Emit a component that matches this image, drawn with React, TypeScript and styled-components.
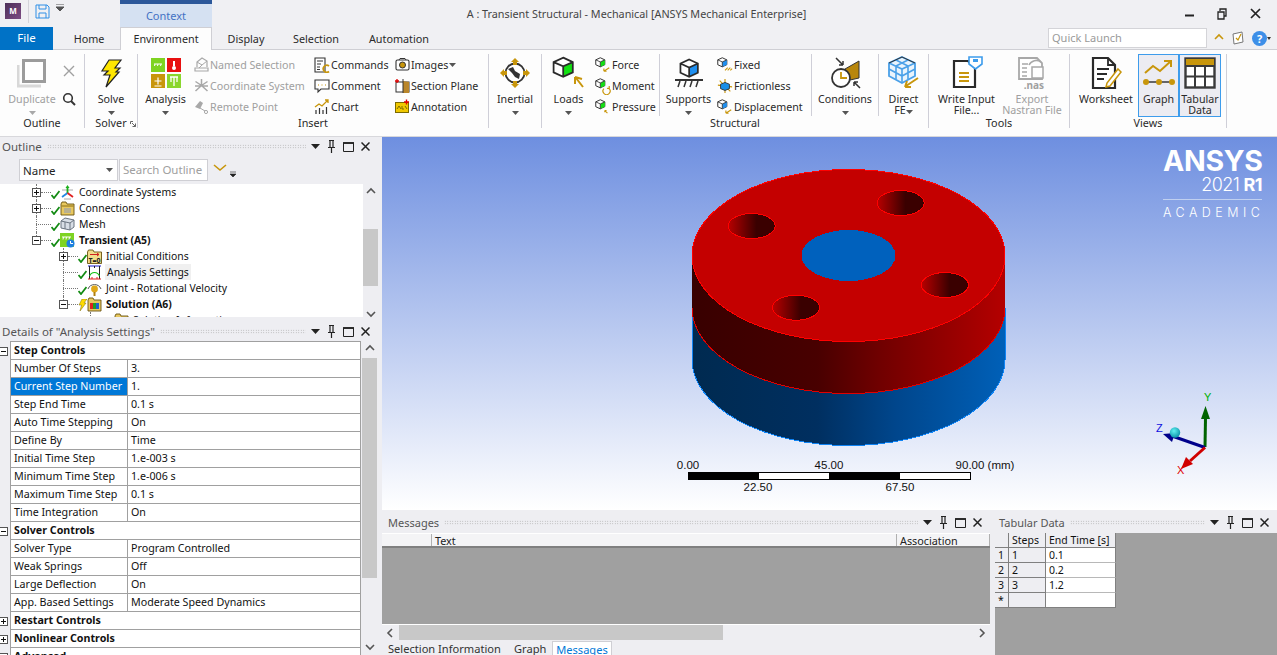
import styled, { createGlobalStyle } from "styled-components";

const GlobalStyle = createGlobalStyle`
  html, body { margin: 0; padding: 0; height: 100%; overflow: hidden; }
  body { font-family: "Noto Sans", "Liberation Sans", sans-serif; font-size: 11px; color: #1e1e1e; background: #eeeef2; }
  #root { height: 100%; }
`;

const GOLD = "#c8960c";
const GREY = "#a8a8a8";

/* ---------- little drawings ---------- */

const Check = () => (
  <CheckSlot width="9" height="9" viewBox="0 0 9 9">
    <path d="M0.5 5 L3 8 L8.5 1" fill="none" stroke="#128a12" strokeWidth="1.8" />
  </CheckSlot>
);

const Bolt = () => (
  <svg width="28" height="30" viewBox="0 0 28 30">
    <path d="M12 2 L24 2 L18 10 L23 10 L19 14 L22 14 L9 29 L13 17 L7 17 L11 13 L5 13 Z" fill="#ffe600" stroke="#222" strokeWidth="1.2" />
  </svg>
);

const SmallLoad = ({ face, mark }: { face: string; mark: "force" | "moment" | "pressure" | "fixed" | "disp" }) => (
  <svg width="18" height="18" viewBox="0 0 18 18">
    <g transform="scale(0.85)">
      <path d="M7 1 L13 3.8 L13 10.2 L7 13 L1 10.2 L1 3.8 Z" fill="#fff" stroke="#333" strokeWidth="1.3" />
      <path d="M7 6.5 L13 3.8 L13 10.2 L7 13 Z" fill={face} />
      <path d="M1 3.8 L7 6.5 L13 3.8 M7 6.5 L7 13" fill="none" stroke="#333" strokeWidth="1.1" />
    </g>
    {mark === "force" && <path d="M10 16 L16 12 M10 16 L10 13 M10 16 L13 16" stroke={GOLD} strokeWidth="1.3" fill="none" />}
    {mark === "disp" && <path d="M10 16 L16 12 M10 16 L10 13 M10 16 L13 16" stroke={GOLD} strokeWidth="1.3" fill="none" />}
    {mark === "moment" && <path d="M10 12 A4 4 0 1 0 16 12 M16 12 L16 9 M16 12 L13.5 11.5" stroke={GOLD} strokeWidth="1.3" fill="none" />}
    {mark === "pressure" && <path d="M14 16 L11 13 M11 13 L11 15 M11 13 L13 13" stroke={GOLD} strokeWidth="1.2" fill="none" />}
    {mark === "fixed" && <path d="M9 15 L12 12 M12 15 L15 12 M15 15 L17 13" stroke={GOLD} strokeWidth="1.2" fill="none" />}
  </svg>
);

const Frictionless = () => (
  <svg width="18" height="18" viewBox="0 0 18 18">
    <path d="M9 1 L9 17 M1 8 L17 10 M3 3 L15 15" stroke={GOLD} strokeWidth="1.3" />
    <path d="M9 5 L14 7 L14 12 L9 14 L4 12 L4 7 Z" fill="#1a8fe8" stroke="#333" strokeWidth="1" />
  </svg>
);

const AnalysisIcon = () => (
  <svg width="30" height="30" viewBox="0 0 30 30">
    <rect x="0" y="0" width="14" height="14" fill="#7ed321" />
    <rect x="16" y="0" width="14" height="14" fill="#e81010" />
    <rect x="0" y="16" width="14" height="14" fill="#c8960c" />
    <rect x="16" y="16" width="14" height="14" fill="#8ad62e" />
    <path d="M3 6 L11 6 M4 6 L3.5 8 M7 6 L6.5 8 M10 6 L9.5 8" stroke="#fff" strokeWidth="1" fill="none" />
    <path d="M23 3 L23 8" stroke="#fff" strokeWidth="2" />
    <circle cx="23" cy="10" r="2" fill="#fff" />
    <path d="M3.5 23 L10.5 23 M7 19.5 L7 26.5 M3.5 28 L10.5 28" stroke="#fff" strokeWidth="1.2" fill="none" />
    <path d="M19 19 L27 19 M23 19 L23 28 M20 19 L20 24 M26 19 L26 24" stroke="#fff" strokeWidth="1.3" fill="none" />
  </svg>
);

const DuplicateIcon = () => (
  <svg width="30" height="30" viewBox="0 0 30 30">
    <path d="M1 7 L1 28 L24 28" fill="none" stroke="#d8d8d8" strokeWidth="3" />
    <rect x="6.5" y="2.5" width="21" height="21" fill="#fff" stroke="#9c9c9c" strokeWidth="3" />
  </svg>
);

const GreyX = () => (
  <svg width="12" height="12" viewBox="0 0 12 12">
    <path d="M1 1 L11 11 M11 1 L1 11" stroke="#a0a0a0" strokeWidth="1.4" />
  </svg>
);

const Magnifier = () => (
  <svg width="14" height="14" viewBox="0 0 14 14">
    <circle cx="6" cy="6" r="4.3" fill="none" stroke="#333" strokeWidth="1.6" />
    <path d="M9 9 L13 13" stroke="#333" strokeWidth="2" />
  </svg>
);

const NamedSelectionIcon = () => (
  <svg width="15" height="15" viewBox="0 0 15 15">
    <path d="M1 11 L14 11 L14 14 L1 14 Z M3 10 L3 5 L8 1 L13 4 L13 10" fill="none" stroke={GREY} strokeWidth="1.2" />
    <path d="M3 5 L8 8 L13 4 M5 11 L8 8" fill="none" stroke={GREY} strokeWidth="1" />
  </svg>
);

const CoordGreyIcon = () => (
  <svg width="15" height="15" viewBox="0 0 15 15">
    <path d="M7.5 7.5 L7.5 1 M7.5 7.5 L1.5 13 M7.5 7.5 L13.5 13 M7.5 7.5 L1.5 3.5 M7.5 7.5 L13.5 3.5 M1 8 L14 8" stroke={GREY} strokeWidth="1.5" fill="none" />
  </svg>
);

const RemotePointIcon = () => (
  <svg width="15" height="15" viewBox="0 0 15 15">
    <path d="M1 8 L6 2 L9 4 L6 10 Z" fill="#a8a8a8" />
    <path d="M6 9 L11 12" stroke={GREY} strokeWidth="1" />
    <circle cx="12" cy="13" r="1.6" fill="none" stroke={GREY} />
  </svg>
);

const CommandsIcon = () => (
  <svg width="16" height="16" viewBox="0 0 16 16">
    <path d="M1 1 L11 1 L11 15 L1 15 Z" fill="#fff" stroke="#333" strokeWidth="1.1" />
    <path d="M3 4 L9 4 M3 7 L7 7 M3 10 L6 10 M3 12.5 L6 12.5" stroke="#333" strokeWidth="1" />
    <path d="M15 9 A3.5 3.5 0 1 0 15 14.5" fill="none" stroke={GOLD} strokeWidth="1.7" />
  </svg>
);

const CommentIcon = () => (
  <svg width="16" height="16" viewBox="0 0 16 16">
    <path d="M1 2 L15 2 L15 11 L7 11 L4 14 L4 11 L1 11 Z" fill="#fff" stroke="#333" strokeWidth="1.1" />
    <path d="M4 7 L5 7 M7.5 7 L8.5 7 M11 7 L12 7" stroke={GOLD} strokeWidth="1.1" />
  </svg>
);

const ChartIcon = () => (
  <svg width="16" height="16" viewBox="0 0 16 16">
    <path d="M1 8 L5 5 L8 7 L14 1 M11 1 L14 1 L14 4" fill="none" stroke={GOLD} strokeWidth="1.3" />
    <path d="M2 15 L2 11 M5.5 15 L5.5 9 M9 15 L9 11 M12.5 15 L12.5 8" stroke="#333" strokeWidth="1.2" />
  </svg>
);

const ImagesIcon = () => (
  <svg width="15" height="15" viewBox="0 0 15 15">
    <rect x="1" y="3" width="13" height="10" rx="1.5" fill="#fff" stroke="#333" strokeWidth="1.1" />
    <circle cx="7.5" cy="8" r="3" fill={GOLD} stroke="#333" strokeWidth="1" />
    <path d="M4 3 L5 1.5 L10 1.5 L11 3" fill="none" stroke="#333" />
  </svg>
);

const SectionPlaneIcon = () => (
  <svg width="15" height="15" viewBox="0 0 15 15">
    <rect x="1" y="4" width="13" height="10" fill="#fff" stroke="#333" strokeWidth="1" />
    <path d="M8 3 L8 15 L14 15 L14 4 Z" fill="#b9862a" />
    <path d="M0 3 L4 3 M2 1 L2 5" stroke="#e00000" strokeWidth="1.3" />
    <path d="M8 1 L8 15" stroke="#333" strokeWidth="1" />
  </svg>
);

const AnnotationIcon = () => (
  <svg width="15" height="15" viewBox="0 0 15 15">
    <rect x="0.5" y="3.5" width="13" height="10" fill="#f0c800" stroke="#7c6a00" />
    <path d="M2 10 L4 7 L6 10 M7 7 L7 10 L9 10 M10 7 L12 10" stroke="#7c6a00" fill="none" />
    <path d="M9 3 L14 3 M11.5 0.5 L11.5 5.5" stroke="#e00000" strokeWidth="1.4" />
  </svg>
);

const InertialIcon = () => (
  <svg width="32" height="32" viewBox="0 0 32 32">
    <circle cx="16" cy="16" r="9.5" fill="#fff" stroke="#333" strokeWidth="1.8" />
    <path d="M9 12 L14 10 L16 14 L21 17 L20 22 L16 20 L13 16 Z" fill="#333" />
    <path d="M11 4 L21 4 L18 4 L18 8 L14 8 L14 4 Z M16 1 L20 5 L12 5 Z M16 31 L20 27 L18 27 L18 24 L14 24 L14 27 L12 27 Z M1 16 L5 12 L5 14 L8 14 L8 18 L5 18 L5 20 Z M31 16 L27 12 L27 14 L24 14 L24 18 L27 18 L27 20 Z" fill={GOLD} />
  </svg>
);

const LoadsIcon = () => (
  <svg width="34" height="34" viewBox="0 0 34 34">
    <g transform="scale(1.6)">
      <path d="M7 1 L13 3.8 L13 10.2 L7 13 L1 10.2 L1 3.8 Z" fill="#fff" />
      <path d="M7 6.5 L13 3.8 L13 10.2 L7 13 Z" fill="#12e012" />
      <path d="M1 3.8 L7 6.5 L13 3.8 M7 6.5 L7 13 M7 1 L13 3.8 L13 10.2 L7 13 L1 10.2 L1 3.8 Z" fill="none" stroke="#2a2a2a" strokeWidth="1.1" />
    </g>
    <path d="M31 31 L24 22 M23 21 L23 28 M23 21 L30 23" stroke={GOLD} strokeWidth="2" fill="none" />
  </svg>
);

const SupportsIcon = () => (
  <svg width="32" height="32" viewBox="0 0 32 32">
    <g transform="translate(6 1) scale(1.45)">
      <path d="M7 1 L13 3.8 L13 10.2 L7 13 L1 10.2 L1 3.8 Z" fill="#fff" />
      <path d="M7 6.5 L13 3.8 L13 10.2 L7 13 Z" fill="#1e8ff0" />
      <path d="M1 3.8 L7 6.5 L13 3.8 M7 6.5 L7 13 M7 1 L13 3.8 L13 10.2 L7 13 L1 10.2 L1 3.8 Z" fill="none" stroke="#2a2a2a" strokeWidth="1.2" />
    </g>
    <path d="M2 23 L30 23" stroke="#333" strokeWidth="2" />
    <path d="M7 24 L5 30 M13 24 L11 30 M19 24 L17 30 M25 24 L23 30" stroke="#333" strokeWidth="1.5" />
  </svg>
);

const ConditionsIcon = () => (
  <svg width="34" height="34" viewBox="0 0 34 34">
    <path d="M17 13 L31 5 L31 22 L22 24 Z" fill="#b8860b" stroke="#333" strokeWidth="1" />
    <circle cx="13" cy="22" r="9" fill="#fff" stroke="#333" strokeWidth="1.8" />
    <path d="M13 16 L13 22 L19 22" fill="none" stroke={GOLD} strokeWidth="1.8" />
    <path d="M8 2 L15 9 M15 9 L15 5 M15 9 L11 9 M32 32 L26 26 M26 26 L30 26 M26 26 L26 30" fill="none" stroke="#333" strokeWidth="1.5" />
  </svg>
);

const DirectFeIcon = () => (
  <svg width="32" height="34" viewBox="0 0 32 34">
    <path d="M14 1 L27 7 L27 20 L14 27 L1 20 L1 7 Z" fill="#eaf4fc" stroke="#4aa0e8" strokeWidth="1.8" />
    <path d="M1 7 L14 13 L27 7 M14 13 L14 27 M8 4 L20 10 M20 4 L8 10 M1 13 L14 20 L27 13 M8 10 L8 23 M20 10 L20 23" fill="none" stroke="#4aa0e8" strokeWidth="1.6" />
    <path d="M1 7 L14 1 L27 7" fill="none" stroke="#333" strokeWidth="1" />
    <path d="M30 22 L18 30 M17 31 L23 31 M17 31 L19 25" stroke={GOLD} strokeWidth="2" fill="none" />
  </svg>
);

const WriteInputIcon = () => (
  <svg width="34" height="34" viewBox="0 0 34 34">
    <path d="M4 5 L18 5 L25 12 L25 31 L4 31 Z" fill="#fff" stroke="#2a2a2a" strokeWidth="2.2" />
    <path d="M9 17 L19 17 M9 21 L19 21 M9 25 L19 25" stroke={GOLD} strokeWidth="2" />
    <path d="M19 1 L32 1 L32 8 L25.5 13 L19 8 Z" fill="#fff" stroke="#3d9cec" strokeWidth="1.6" />
    <rect x="23" y="3" width="5" height="3" fill="#3d9cec" />
  </svg>
);

const ExportIcon = () => (
  <svg width="34" height="34" viewBox="0 0 34 34">
    <path d="M4 2 L22 2 L27 7 L27 23 L4 23 Z" fill="#fff" stroke="#a8a8a8" strokeWidth="1.8" />
    <path d="M7 8 L13 8 M7 12 L12 12 M7 16 L12 16 M7 20 L12 20" stroke="#a8a8a8" strokeWidth="1.4" />
    <path d="M14 9 A8 8 0 0 1 26 6" fill="none" stroke="#a8a8a8" strokeWidth="1.6" />
    <rect x="17" y="11" width="11" height="11" fill="#fff" stroke="#a8a8a8" strokeWidth="1.5" />
    <text x="29" y="33" textAnchor="end" fontSize="10" fontWeight="700" fill="#a0a0a0">.nas</text>
  </svg>
);

const WorksheetIcon = () => (
  <svg width="34" height="34" viewBox="0 0 34 34">
    <path d="M4 2 L19 2 L26 9 L26 32 L4 32 Z" fill="#fff" stroke="#2a2a2a" strokeWidth="2.2" />
    <path d="M19 2 L19 9 L26 9" fill="none" stroke="#2a2a2a" strokeWidth="1.8" />
    <path d="M8 13 L20 13 M8 18 L18 18 M8 23 L15 23" stroke="#2a2a2a" strokeWidth="2" />
    <path d="M29 13 L32 16 L21 30 L17 31 L18 27 Z" fill="#fff" stroke={GOLD} strokeWidth="1.5" />
  </svg>
);

const GraphIcon = () => (
  <svg width="32" height="28" viewBox="0 0 32 28">
    <path d="M2 14 L10 7 L17 12 L28 2 M21 2 L28 2 L28 8" fill="none" stroke={GOLD} strokeWidth="2" />
    <path d="M3 23 L29 23" stroke="#444" strokeWidth="1.6" />
    <circle cx="3" cy="23" r="3" fill={GOLD} />
    <circle cx="16" cy="23" r="3" fill={GOLD} />
    <circle cx="29" cy="23" r="3" fill={GOLD} />
  </svg>
);

const TableIcon = () => (
  <svg width="32" height="32" viewBox="0 0 32 32">
    <rect x="1.5" y="1.5" width="29" height="29" fill="#fff" stroke="#3a3a3a" strokeWidth="2.4" />
    <rect x="2" y="2" width="28" height="6" fill={GOLD} />
    <path d="M2 9 L30 9 M2 19.5 L30 19.5 M11 9 L11 30 M21 9 L21 30" stroke="#3a3a3a" strokeWidth="2" />
  </svg>
);

const Triangle = ({ color = "#555" }: { color?: string }) => (
  <svg width="7" height="4" viewBox="0 0 7 4">
    <path d="M0 0 L7 0 L3.5 4 Z" fill={color} />
  </svg>
);

const Chevron = ({ dir, color = "#555" }: { dir: "up" | "down" | "left" | "right"; color?: string }) => {
  const d = { up: "M1 6 L5 2 L9 6", down: "M1 3 L5 7 L9 3", left: "M6 1 L2 5 L6 9", right: "M3 1 L7 5 L3 9" }[dir];
  return (
    <svg width="10" height="10" viewBox="0 0 10 10">
      <path d={d} fill="none" stroke={color} strokeWidth="1.6" />
    </svg>
  );
};

const PanelButtons = () => (
  <PanelIcons>
    <svg width="9" height="5" viewBox="0 0 9 5"><path d="M0 0 L9 0 L4.5 5 Z" fill="#222" /></svg>
    <svg width="9" height="13" viewBox="0 0 9 13"><path d="M2 0.5 L7 0.5 M3 1 L3 7 M6 1 L6 7 M1 7.5 L8 7.5 M4.5 8 L4.5 13" stroke="#222" strokeWidth="1.2" fill="none" /></svg>
    <svg width="11" height="10" viewBox="0 0 11 10"><path d="M0.5 1 L10.5 1 L10.5 9.5 L0.5 9.5 Z" fill="none" stroke="#222" strokeWidth="1" /><path d="M0 1 L11 1" stroke="#222" strokeWidth="1.8" /></svg>
    <svg width="9" height="9" viewBox="0 0 9 9"><path d="M0.5 0.5 L8.5 8.5 M8.5 0.5 L0.5 8.5" stroke="#222" strokeWidth="1.5" /></svg>
  </PanelIcons>
);

/* tree icons */
const Folder = ({ inner }: { inner: string }) => (
  <svg width="15" height="15" viewBox="0 0 15 15">
    <path d="M1 3 L1 14 L14 14 L14 3 L7 3 L6 1 L2 1 Z" fill="#e8c860" stroke="#6a5410" strokeWidth="0.9" />
    <path d="M1.5 5 L13.5 5" stroke="#8c6f14" />
    <rect x="4" y="7" width="7" height="5" fill={inner} />
  </svg>
);
const CoordIcon = () => (
  <svg width="15" height="15" viewBox="0 0 15 15">
    <path d="M2 5 L13 5 M4 14 L11 14" stroke="#aaa" strokeWidth="1" />
    <path d="M7.5 8 L7.5 2" stroke="#1cb01c" strokeWidth="1.8" />
    <path d="M7.5 8 L2 12" stroke="#2288e0" strokeWidth="1.8" />
    <path d="M7.5 8 L13 12" stroke="#e02020" strokeWidth="1.8" />
    <path d="M7.5 0 L5.5 3 L9.5 3 Z" fill="#1cb01c" />
  </svg>
);
const MeshIcon = () => (
  <svg width="15" height="15" viewBox="0 0 15 15">
    <path d="M1 4 L5 1 L14 3 L14 10 L10 13 L1 11 Z" fill="#d8dee6" stroke="#6a7480" />
    <path d="M1 4 L10 6 L14 3 M10 6 L10 13 M5 5 L5 12" fill="none" stroke="#6a7480" />
  </svg>
);
const TransientIcon = () => (
  <svg width="15" height="15" viewBox="0 0 15 15">
    <rect x="0" y="0" width="14" height="14" fill="#7ed321" />
    <path d="M2 4 L11 4 M3.5 4 L3 6.5 M6.5 4 L6 6.5 M9.5 4 L9 6.5" stroke="#fff" />
    <circle cx="10.5" cy="10.5" r="4" fill="#1e80e0" />
    <path d="M10.5 8 L10.5 10.5 L13 10.5" stroke="#fff" fill="none" />
  </svg>
);
const InitialIcon = () => (
  <svg width="15" height="15" viewBox="0 0 15 15">
    <path d="M0.5 3 L0.5 14.5 L14.5 14.5 L14.5 3 L7 3 L6 1 L1.5 1 Z" fill="#f0dc8c" stroke="#6a5410" strokeWidth="0.9" />
    <path d="M3 5.5 L12 5.5 M10 4 L12 5.5 L10 7" stroke="#d02020" fill="none" />
    <text x="7.5" y="13.5" textAnchor="middle" fontSize="7" fontWeight="700" fill="#222">T=0</text>
  </svg>
);
const AnalysisSettingsIcon = () => (
  <svg width="15" height="15" viewBox="0 0 15 15">
    <path d="M1 1 L14 1" stroke="#1a1ad0" strokeWidth="1" />
    <path d="M2.5 1 L2.5 14 M12.5 1 L12.5 14 M7.5 1 L7.5 3" stroke="#222" />
    <path d="M1 14 L14 14 M5 14 L5 12 M10 14 L10 12" stroke="#e02020" />
    <path d="M2.5 11 A5.5 6 0 0 1 12.5 11" stroke="#12c012" strokeWidth="1.2" fill="none" />
  </svg>
);
const JointIcon = () => (
  <svg width="15" height="15" viewBox="0 0 15 15">
    <path d="M1 8 A7 7 0 0 1 14 8" stroke="#555" fill="none" />
    <circle cx="7.5" cy="8" r="3.4" fill="#e0a818" />
    <path d="M7.5 11 L7.5 15" stroke="#b08010" strokeWidth="2" />
  </svg>
);
const SolutionIcon = () => (
  <svg width="15" height="15" viewBox="0 0 15 15">
    <path d="M1 3 L1 14 L14 14 L14 3 L7 3 L6 1 L2 1 Z" fill="#e8c860" stroke="#6a5410" strokeWidth="0.9" />
    <rect x="3" y="6" width="3" height="6" fill="#e02020" />
    <rect x="6" y="6" width="3" height="6" fill="#20a020" />
    <rect x="9" y="6" width="3" height="6" fill="#2060d0" />
  </svg>
);
const TreeBolt = () => (
  <CheckSlot width="9" height="12" viewBox="0 0 9 12">
    <path d="M4 0 L9 0 L6 4 L8 4 L2 12 L3.5 6 L1 6 Z" fill="#ffdc00" stroke="#7c6a00" strokeWidth="0.5" />
  </CheckSlot>
);

/* ---------- shell ---------- */

const Page = styled.div`
  width: 1277px;
  height: 655px;
  display: flex;
  flex-direction: column;
  overflow: hidden;
`;

const TitleBar = styled.div`
  height: 27px;
  display: grid;
  grid-template-columns: 1fr auto 1fr;
  background: #f0f0f3;
`;

const QuickAccess = styled.div`
  display: flex;
  align-items: flex-start;
  padding-left: 5px;
`;

const AppMark = styled.div`
  width: 16px;
  height: 16px;
  margin-top: 3px;
  background: linear-gradient(135deg, #4c2f58, #7d4d84);
  color: #fff;
  font-size: 8px;
  font-weight: 700;
  line-height: 16px;
  text-align: center;
`;

const QuickSep = styled.div`
  width: 1px;
  height: 23px;
  background: #d4d4da;
  margin: 0 6px 0 7px;
`;

const SaveSlot = styled.div`
  margin-top: 4px;
  display: flex;
  gap: 6px;
  align-items: flex-start;
  width: 85px;
`;

const ContextTab = styled.div`
  width: 92px;
  height: 27px;
  box-sizing: border-box;
  border-top: 4px solid #2b579a;
  background: #d5e1f2;
  color: #4472c4;
  text-align: center;
  font-size: 11px;
  line-height: 23px;
`;

const WindowTitle = styled.div`
  color: #444;
  font-size: 10.8px;
  line-height: 27px;
  margin-right: 4px;
`;

const WindowButtons = styled.div`
  display: flex;
  justify-content: flex-end;
  align-items: center;
  gap: 23px;
  padding: 0 16px 0 0;
`;

const TabRow = styled.div`
  height: 23px;
  display: flex;
  background: #f0f0f3;
  border-bottom: 1px solid #cfcfd4;
  box-sizing: border-box;
`;

const FileTab = styled.div`
  width: 53px;
  height: 23px;
  background: #0072c6;
  color: #fff;
  text-align: center;
  line-height: 22px;
  font-size: 11.5px;
`;

const Tab = styled.div<{ $w: number; $active?: boolean; $inset?: number }>`
  width: ${(p) => p.$w}px;
  height: ${(p) => (p.$active ? 23 : 22)}px;
  box-sizing: border-box;
  padding-left: ${(p) => p.$inset ?? 0}px;
  text-align: center;
  font-size: 10.8px;
  color: #2a2a2a;
  background: ${(p) => (p.$active ? "#fdfdfd" : "transparent")};
  border: ${(p) => (p.$active ? "1px solid #cfcfd4" : "none")};
  border-bottom: none;
  line-height: ${(p) => (p.$active ? 22 : 23)}px;
`;

const TabTools = styled.div`
  margin-left: auto;
  display: flex;
  align-items: center;
  gap: 7px;
  height: 22px;
  padding-right: 6px;
`;

const QuickLaunch = styled.div`
  width: 159px;
  height: 20px;
  box-sizing: border-box;
  border: 1px solid #d4d4d8;
  background: #fff;
  color: #9a9a9a;
  padding-left: 3px;
  line-height: 18px;
  font-size: 11px;
`;

/* ---------- ribbon ---------- */

const Ribbon = styled.div`
  height: 87px;
  flex: none;
  display: flex;
  background: #fdfdfd;
  border-bottom: 1px solid #d8d8dc;
  box-sizing: border-box;
  padding-top: 4px;
`;

const Group = styled.div<{ $w: number }>`
  width: ${(p) => p.$w}px;
  height: 74px;
  box-sizing: border-box;
  border-right: 1px solid #cfcfd8;
  display: flex;
  flex-direction: column;
  flex: none;
`;

const GroupBody = styled.div<{ $inset?: number }>`
  height: 63px;
  display: flex;
  padding-left: ${(p) => p.$inset ?? 0}px;
`;

const GroupLabel = styled.div<{ $inset?: number }>`
  text-align: center;
  line-height: 12px;
  font-size: 10.8px;
  color: #2a2a2a;
  padding-left: ${(p) => p.$inset ?? 0}px;
`;

const Launcher = styled.svg`
  margin-left: 3px;
`;

const Big = styled.div<{ $w: number; $disabled?: boolean; $hot?: boolean }>`
  width: ${(p) => p.$w}px;
  height: 63px;
  flex: none;
  box-sizing: border-box;
  display: flex;
  flex-direction: column;
  align-items: center;
  color: ${(p) => (p.$disabled ? "#a0a0a0" : "#2a2a2a")};
  background: ${(p) => (p.$hot ? "#ececf2" : "transparent")};
  border: ${(p) => (p.$hot ? "1px solid #3d9cec" : "1px solid transparent")};
  font-size: 10.7px;
  line-height: 11px;
  text-align: center;
  white-space: nowrap;
`;

const BigIcon = styled.div`
  height: 36px;
  display: flex;
  align-items: center;
  justify-content: center;
`;

const BigText = styled.div`
  margin-top: 1px;
  padding-top: 2px;
`;

const BigCaret = styled.div`
  margin-top: 6px;
  line-height: 0;
`;

const Column = styled.div<{ $w: number }>`
  width: ${(p) => p.$w}px;
  flex: none;
  display: flex;
  flex-direction: column;
`;

const SmallButton = styled.div<{ $disabled?: boolean }>`
  height: 21px;
  display: flex;
  align-items: center;
  gap: 1px;
  font-size: 10.7px;
  color: ${(p) => (p.$disabled ? "#a0a0a0" : "#2a2a2a")};
  white-space: nowrap;
`;

const IconCell = styled.div`
  width: 16px;
  flex: none;
  display: flex;
  align-items: center;
  justify-content: center;
`;

const InnerSep = styled.div`
  width: 1px;
  height: 62px;
  flex: none;
  background: #cfcfd8;
`;

const SmallTools = styled.div`
  width: 10px;
  flex: none;
  display: flex;
  flex-direction: column;
  align-items: center;
  padding-top: 11px;
  gap: 15px;
`;

/* ---------- main area ---------- */

const Main = styled.div`
  flex: 1;
  min-height: 0;
  display: flex;
  background: #eeeef2;
`;

const LeftColumn = styled.div`
  width: 378px;
  margin-right: 4px;
  display: flex;
  flex-direction: column;
  flex: none;
`;

const PanelHeader = styled.div<{ $tall?: boolean; $inset?: number }>`
  height: 19px;
  margin-bottom: ${(p) => (p.$tall ? 1 : 0)}px;
  flex: none;
  display: flex;
  align-items: center;
  padding: 0 8px 0 ${(p) => p.$inset ?? 2}px;
  background: #eeeef2;
  color: #555;
  font-size: ${(p) => (p.$tall ? 11 : 11.5)}px;
  gap: 5px;
`;

const Grip = styled.div`
  flex: 1;
  height: 5px;
  background-image: radial-gradient(#a8a8a8 0.6px, transparent 0.7px);
  background-size: 2.5px 2.5px;
`;

const PanelIcons = styled.div`
  display: flex;
  align-items: center;
  gap: 7px;
`;

const OutlinePanel = styled.div`
  height: 185px;
  display: flex;
  flex-direction: column;
  flex: none;
`;

const OutlineTools = styled.div`
  height: 28px;
  flex: none;
  display: flex;
  align-items: center;
  padding-left: 19px;
  gap: 1px;
`;

const NameSelect = styled.div`
  width: 99px;
  height: 22px;
  box-sizing: border-box;
  border: 1px solid #cfcfd4;
  background: #fff;
  display: flex;
  align-items: center;
  justify-content: space-between;
  padding: 0 4px 0 3px;
  font-size: 11.5px;
`;

const SearchBox = styled.div`
  width: 89px;
  height: 22px;
  box-sizing: border-box;
  border: 1px solid #cfcfd4;
  background: #fff;
  color: #a0a0a0;
  padding-left: 3px;
  line-height: 20px;
  font-size: 11.5px;
`;

const TreeArea = styled.div`
  flex: 1;
  min-height: 0;
  display: flex;
`;

const Tree = styled.div`
  flex: 1;
  background: #fff;
  overflow: hidden;
  height: 133px;
`;

const TreeRow = styled.div<{ $level: number; $end?: boolean }>`
  position: relative;
  height: 16px;
  display: flex;
  align-items: center;
  padding-left: ${(p) => 32 + p.$level * 27}px;
  &::before {
    content: "";
    position: absolute;
    left: ${(p) => 36 + p.$level * 27}px;
    top: 0;
    bottom: ${(p) => (p.$end ? "8px" : "0")};
    border-left: 1px dotted #777;
  }
`;

const Expander = styled.div`
  position: relative;
  z-index: 1;
  width: 9px;
  height: 9px;
  box-sizing: border-box;
  border: 1px solid #555;
  background: #fff;
  flex: none;
  display: flex;
  align-items: center;
  justify-content: center;
`;

const GutterExpander = styled(Expander)`
  margin-left: -1px;
`;

const ExpanderBar = styled.div<{ $plus?: boolean }>`
  width: 5px;
  height: 1px;
  background: #111;
  position: relative;
  &::after {
    content: "";
    display: ${(p) => (p.$plus ? "block" : "none")};
    position: absolute;
    left: 2px;
    top: -2px;
    width: 1px;
    height: 5px;
    background: #111;
  }
`;

const Stub = styled.div<{ $long?: boolean }>`
  width: ${(p) => (p.$long ? 15 : 10)}px;
  margin-left: ${(p) => (p.$long ? 4 : 0)}px;
  flex: none;
  border-top: 1px dotted #777;
`;

const CheckSlot = styled.svg`
  flex: none;
  align-self: flex-end;
  margin-bottom: 1px;
`;

const TreeIconSlot = styled.div`
  width: 15px;
  height: 15px;
  flex: none;
  line-height: 0;
`;

const TreeLabel = styled.div<{ $bold?: boolean; $selected?: boolean }>`
  margin-left: ${(p) => (p.$selected ? 3 : 4)}px;
  padding: 0 ${(p) => (p.$selected ? "2px" : "0")};
  font-size: 10.4px;
  line-height: 16px;
  font-weight: ${(p) => (p.$bold ? 700 : 400)};
  background: ${(p) => (p.$selected ? "#f0f0f0" : "transparent")};
  color: #111;
  white-space: nowrap;
`;

const ScrollBar = styled.div`
  width: 15px;
  flex: none;
  display: flex;
  flex-direction: column;
  background: #eeeef2;
`;

const ScrollArrow = styled.div`
  height: 16px;
  display: flex;
  align-items: center;
  justify-content: center;
  flex: none;
`;

const SideArrow = styled(ScrollArrow)`
  width: 17px;
`;

const ScrollTrack = styled.div<{ $offset: number }>`
  flex: 1;
  min-height: 0;
  padding-top: ${(p) => p.$offset}px;
`;

const ScrollThumb = styled.div<{ $size: number }>`
  height: ${(p) => p.$size}px;
  background: #c8c8c8;
`;

const DetailsPanel = styled.div`
  flex: 1;
  min-height: 0;
  display: flex;
  flex-direction: column;
  overflow: hidden;
`;

const DetailsBody = styled.div`
  flex: 1;
  min-height: 0;
  display: flex;
  gap: 1px;
`;

const PropList = styled.div`
  width: 361px;
  flex: none;
  overflow: hidden;
`;

const PropRow = styled.div`
  display: flex;
  height: 18px;
`;

const Gutter = styled.div`
  width: 10px;
  flex: none;
  display: flex;
  align-items: center;
`;

const PropName = styled.div<{ $selected?: boolean }>`
  width: 118px;
  flex: none;
  box-sizing: border-box;
  padding-left: 3px;
  line-height: 17px;
  font-size: 10.7px;
  white-space: nowrap;
  overflow: hidden;
  background: ${(p) => (p.$selected ? "#0078d7" : "#fff")};
  color: ${(p) => (p.$selected ? "#fff" : "#111")};
  border: 1px solid #a0a0a0;
  border-top: none;
`;

const PropValue = styled.div`
  flex: 1;
  box-sizing: border-box;
  padding-left: 3px;
  line-height: 17px;
  font-size: 10.7px;
  background: #fff;
  color: #111;
  border-bottom: 1px solid #a0a0a0;
  border-right: 1px solid #a0a0a0;
`;

const PropSection = styled.div`
  flex: 1;
  box-sizing: border-box;
  padding-left: 3px;
  line-height: 17px;
  font-size: 10.7px;
  font-weight: 700;
  background: #fff;
  color: #111;
  border: 1px solid #a0a0a0;
  border-top: none;
`;

const PropTop = styled.div`
  height: 0;
  margin-left: 10px;
  border-top: 1px solid #a0a0a0;
`;

const RightColumn = styled.div`
  flex: 1;
  min-width: 0;
  display: flex;
  flex-direction: column;
`;

const Viewport = styled.div`
  position: relative;
  height: 373px;
  flex: none;
  background: linear-gradient(#6e8fe0, #ffffff);
  overflow: hidden;
  margin-bottom: 3px;
`;

const ModelDrawing = styled.svg`
  display: block;
`;

const Logo = styled.div`
  position: absolute;
  top: 9px;
  right: 15px;
  width: 99px;
  color: #fff;
  text-align: right;
  font-family: Inter, sans-serif;
`;

const LogoName = styled.div`
  font-size: 28.5px;
  line-height: 30px;
  font-weight: 700;
  letter-spacing: -0.3px;
`;

const LogoRelease = styled.div`
  font-size: 18px;
  line-height: 18px;
  font-weight: 300;
  letter-spacing: -0.6px;
  & b {
    font-weight: 700;
  }
`;

const LogoEdition = styled.div`
  margin-top: 5px;
  padding-top: 6px;
  border-top: 1px solid #c0d0f0;
  font-size: 12.5px;
  line-height: 14px;
  font-weight: 300;
  letter-spacing: 4.5px;
  text-align: left;
  white-space: nowrap;
`;

const BottomRow = styled.div`
  flex: 1;
  min-height: 0;
  display: flex;
  gap: 5px;
`;

const MessagesPanel = styled.div`
  width: 608px;
  flex: none;
  display: flex;
  flex-direction: column;
`;

const MessagesHeader = styled.div`
  height: 12px;
  flex: none;
  display: flex;
  background: #f4f4f6;
  border-top: 1px solid #fff;
  font-size: 10.8px;
  line-height: 14px;
  color: #222;
  border-bottom: 2px solid #808080;
  box-sizing: content-box;
`;

const MessagesCol = styled.div<{ $w?: number }>`
  width: ${(p) => (p.$w ? `${p.$w}px` : "auto")};
  flex: ${(p) => (p.$w ? "none" : "1")};
  box-sizing: border-box;
  padding-left: 3px;
  border-right: 1px solid #b0b0b0;
`;

const MessagesBody = styled.div`
  height: 76px;
  flex: none;
  background: #a0a0a0;
`;

const HorizontalBar = styled.div`
  height: 16px;
  flex: none;
  display: flex;
  align-items: center;
  background: #eeeef2;
  border-top: 1px solid #fff;
  box-sizing: border-box;
`;

const HorizontalTrack = styled.div`
  flex: 1;
  height: 15px;
`;

const HorizontalThumb = styled.div`
  width: 324px;
  height: 15px;
  background: #c8c8c8;
`;

const BottomTabs = styled.div`
  flex: 1;
  display: flex;
  padding: 1px 0 0 6px;
  font-size: 11.1px;
  line-height: 15px;
  color: #333;
  align-items: flex-start;
  overflow: hidden;
`;

const BottomTab = styled.div<{ $w: number; $active?: boolean }>`
  width: ${(p) => p.$w}px;
  flex: none;
  height: 15px;
  box-sizing: border-box;
  color: ${(p) => (p.$active ? "#0078d7" : "#333")};
  background: ${(p) => (p.$active ? "#fff" : "transparent")};
  border: ${(p) => (p.$active ? "1px solid #cfcfd4" : "none")};
  border-bottom: none;
  text-align: ${(p) => (p.$active ? "center" : "left")};
  white-space: nowrap;
`;

const TabularPanel = styled.div`
  flex: 1;
  min-width: 0;
  display: flex;
  flex-direction: column;
`;

const TabularBody = styled.div`
  flex: 1;
  background: #a0a0a0;
`;

const DataTable = styled.table`
  border-collapse: separate;
  border-spacing: 0;
  table-layout: fixed;
  width: 121px;
  font-size: 10.5px;
  color: #111;
`;

const DataCell = styled.td<{ $w?: number; $head?: boolean; $white?: boolean }>`
  width: ${(p) => (p.$w ? `${p.$w}px` : "auto")};
  height: 13px;
  line-height: 13px;
  padding: 1px 0 0 3px;
  box-sizing: content-box;
  background: ${(p) => (p.$white ? "#fff" : "#eeeef2")};
  border-right: 1px solid #808080;
  border-bottom: 1px solid ${(p) => (p.$head ? "#808080" : "#b8b8b8")};
`;

const rowsA: [string, string][] = [
  ["Number Of Steps", "3."],
  ["Current Step Number", "1."],
  ["Step End Time", "0.1 s"],
  ["Auto Time Stepping", "On"],
  ["Define By", "Time"],
  ["Initial Time Step", "1.e-003 s"],
  ["Minimum Time Step", "1.e-006 s"],
  ["Maximum Time Step", "0.1 s"],
  ["Time Integration", "On"],
];

const rowsB: [string, string][] = [
  ["Solver Type", "Program Controlled"],
  ["Weak Springs", "Off"],
  ["Large Deflection", "On"],
  ["App. Based Settings", "Moderate Speed Dynamics"],
];

const Section = ({ title, open }: { title: string; open?: boolean }) => (
  <PropRow>
    <Gutter>
      <GutterExpander>
        <ExpanderBar $plus={!open} />
      </GutterExpander>
    </Gutter>
    <PropSection>{title}</PropSection>
  </PropRow>
);

const Rows = ({ rows }: { rows: [string, string][] }) => (
  <>
    {rows.map(([name, value]) => (
      <PropRow key={name}>
        <Gutter />
        <PropName $selected={name === "Current Step Number"}>{name}</PropName>
        <PropValue>{value}</PropValue>
      </PropRow>
    ))}
  </>
);

const OutlineTree = () => (
  <Tree>
    <TreeRow $level={0}>
      <Expander><ExpanderBar $plus /></Expander><Stub /><Check />
      <TreeIconSlot><CoordIcon /></TreeIconSlot><TreeLabel>Coordinate Systems</TreeLabel>
    </TreeRow>
    <TreeRow $level={0}>
      <Expander><ExpanderBar $plus /></Expander><Stub /><Check />
      <TreeIconSlot><Folder inner="#b8b090" /></TreeIconSlot><TreeLabel>Connections</TreeLabel>
    </TreeRow>
    <TreeRow $level={0}>
      <Stub $long /><Check />
      <TreeIconSlot><MeshIcon /></TreeIconSlot><TreeLabel>Mesh</TreeLabel>
    </TreeRow>
    <TreeRow $level={0} $end>
      <Expander><ExpanderBar /></Expander><Stub /><Check />
      <TreeIconSlot><TransientIcon /></TreeIconSlot><TreeLabel $bold>Transient (A5)</TreeLabel>
    </TreeRow>
    <TreeRow $level={1}>
      <Expander><ExpanderBar $plus /></Expander><Stub /><Check />
      <TreeIconSlot><InitialIcon /></TreeIconSlot><TreeLabel>Initial Conditions</TreeLabel>
    </TreeRow>
    <TreeRow $level={1}>
      <Stub $long /><Check />
      <TreeIconSlot><AnalysisSettingsIcon /></TreeIconSlot><TreeLabel $selected>Analysis Settings</TreeLabel>
    </TreeRow>
    <TreeRow $level={1}>
      <Stub $long /><Check />
      <TreeIconSlot><JointIcon /></TreeIconSlot><TreeLabel>Joint - Rotational Velocity</TreeLabel>
    </TreeRow>
    <TreeRow $level={1} $end>
      <Expander><ExpanderBar /></Expander><Stub /><TreeBolt />
      <TreeIconSlot><SolutionIcon /></TreeIconSlot><TreeLabel $bold>Solution (A6)</TreeLabel>
    </TreeRow>
    <TreeRow $level={2}>
      <Stub $long /><Check />
      <TreeIconSlot><Folder inner="#e8c860" /></TreeIconSlot><TreeLabel>Solution Information</TreeLabel>
    </TreeRow>
  </Tree>
);

const Model = () => (
  <ModelDrawing width="895" height="373" viewBox="382 137 895 373">
    <defs>
      <linearGradient id="redSide" x1="692" x2="1005" gradientUnits="userSpaceOnUse" y1="0" y2="0">
        <stop offset="0" stopColor="#380000" />
        <stop offset="0.4" stopColor="#480000" />
        <stop offset="0.6" stopColor="#700000" />
        <stop offset="1" stopColor="#b40000" />
      </linearGradient>
      <linearGradient id="blueSide" x1="692" x2="1005" gradientUnits="userSpaceOnUse" y1="0" y2="0">
        <stop offset="0" stopColor="#002a50" />
        <stop offset="0.4" stopColor="#002f60" />
        <stop offset="0.65" stopColor="#00468c" />
        <stop offset="1" stopColor="#0060b8" />
      </linearGradient>
      <linearGradient id="hole" x1="0" x2="1" y1="0" y2="0">
        <stop offset="0" stopColor="#b80000" />
        <stop offset="0.6" stopColor="#3a0000" />
        <stop offset="1" stopColor="#3a0000" />
      </linearGradient>
      <radialGradient id="ball" cx="0.4" cy="0.35" r="0.7">
        <stop offset="0" stopColor="#60f0f0" />
        <stop offset="1" stopColor="#0890a8" />
      </radialGradient>
    </defs>
    <g shapeRendering="crispEdges">
      <path d="M692 307.5 A156.5 86 0 0 0 1005 307.5 L1005 359.5 A156.5 86 0 0 1 692 359.5 Z" fill="url(#blueSide)" stroke="#1084f4" strokeWidth="1" />
      <path d="M692 255.5 A156.5 86 0 0 0 1005 255.5 L1005 307.5 A156.5 86 0 0 1 692 307.5 Z" fill="url(#redSide)" />
      <path d="M692 307.5 A156.5 86 0 0 0 1005 307.5" fill="none" stroke="#e00000" strokeWidth="1" />
      <ellipse cx="848.5" cy="255.5" rx="156.5" ry="86" fill="#c40000" stroke="#ff0000" strokeWidth="1" />
      <ellipse cx="848.5" cy="255.5" rx="47" ry="25.5" fill="#0061bd" />
      <ellipse cx="751.7" cy="226" rx="23.5" ry="12.5" fill="url(#hole)" stroke="#ff0000" />
      <ellipse cx="900.7" cy="203" rx="23.5" ry="12.5" fill="url(#hole)" stroke="#ff0000" />
      <ellipse cx="945" cy="285" rx="23.5" ry="12.5" fill="url(#hole)" stroke="#ff0000" />
      <ellipse cx="796" cy="307.7" rx="23.5" ry="12.5" fill="url(#hole)" stroke="#ff0000" />
    </g>

    {/* scale */}
    <g fontFamily="Liberation Sans, sans-serif" fontSize="11.5" fill="#111" textAnchor="middle">
      <text x="688" y="469">0.00</text>
      <text x="829" y="469">45.00</text>
      <text x="970" y="469">90.00</text>
      <text x="1001" y="469">(mm)</text>
      <text x="758" y="491">22.50</text>
      <text x="900" y="491">67.50</text>
    </g>
    <g shapeRendering="crispEdges">
      <rect x="688.5" y="472.5" width="282" height="7" fill="#fff" stroke="#000" />
      <rect x="688" y="472" width="71" height="8" fill="#000" />
      <rect x="829" y="472" width="71" height="8" fill="#000" />
    </g>

    {/* triad */}
    <path d="M1205 447 L1205.5 418" stroke="#006400" strokeWidth="3" />
    <path d="M1205.5 406 L1210 419 L1201 419 Z" fill="#006400" />
    <path d="M1205 447.5 L1172 436" stroke="#00008b" strokeWidth="3" />
    <path d="M1163 434 L1175 433 L1172 442 Z" fill="#00008b" />
    <circle cx="1175" cy="432.5" r="5.2" fill="url(#ball)" />
    <path d="M1205 447.5 L1190 461" stroke="#d00000" strokeWidth="3" />
    <path d="M1181 469 L1186 457 L1193 464 Z" fill="#d00000" />
    <g fontFamily="Liberation Sans, sans-serif" fontSize="11">
      <text x="1204" y="401" fill="#00b000">Y</text>
      <text x="1156" y="432" fill="#1010e0">Z</text>
      <text x="1177" y="474" fill="#e00000">X</text>
    </g>
  </ModelDrawing>
);

function App() {
  return (
    <Page>
      <GlobalStyle />
      <TitleBar>
        <QuickAccess>
          <AppMark>M</AppMark>
          <QuickSep />
          <SaveSlot>
            <svg width="15" height="15" viewBox="0 0 15 15">
              <path d="M1 1 L12 1 L14 3 L14 14 L1 14 Z M4 1 L4 5 L11 5 L11 1 M4 14 L4 9 L11 9 L11 14" fill="none" stroke="#2e8fe6" strokeWidth="1" />
            </svg>
            <svg width="8" height="7" viewBox="0 0 8 7">
              <path d="M0 0 L8 0 M0 3 L8 3 L4 7 Z" stroke="#555" fill="#555" />
            </svg>
          </SaveSlot>
          <ContextTab>Context</ContextTab>
        </QuickAccess>
        <WindowTitle>A : Transient Structural - Mechanical [ANSYS Mechanical Enterprise]</WindowTitle>
        <WindowButtons>
          <svg width="9" height="9" viewBox="0 0 9 9"><path d="M0 6.5 L9 6.5" stroke="#222" strokeWidth="2" /></svg>
          <svg width="10" height="12" viewBox="0 0 10 12"><path d="M3 3 L3 1 L9 1 L9 8 L7 8 M1 4 L7 4 L7 11 L1 11 Z" fill="none" stroke="#222" strokeWidth="1.3" /></svg>
          <svg width="11" height="11" viewBox="0 0 11 11"><path d="M1 1 L10 10 M10 1 L1 10" stroke="#222" strokeWidth="1.7" /></svg>
        </WindowButtons>
      </TitleBar>

      <TabRow>
        <FileTab>File</FileTab>
        <Tab $w={67} $inset={5}>Home</Tab>
        <Tab $w={92} $active>Environment</Tab>
        <Tab $w={68}>Display</Tab>
        <Tab $w={72}>Selection</Tab>
        <Tab $w={94}>Automation</Tab>
        <TabTools>
          <QuickLaunch>Quick Launch</QuickLaunch>
          <Chevron dir="up" color={GOLD} />
          <svg width="14" height="14" viewBox="0 0 14 14"><path d="M2 3 L11 1 L12 11 L3 13 Z" fill="#fff" stroke="#777" /><path d="M5 7 L7 9 L10 3" stroke={GOLD} strokeWidth="1.2" fill="none" /></svg>
          <svg width="19" height="15" viewBox="0 0 19 15">
            <circle cx="7.5" cy="7.5" r="7.5" fill="#3d8fe8" />
            <text x="7.5" y="11.5" textAnchor="middle" fontSize="11" fontWeight="700" fill="#fff">?</text>
            <path d="M15 6 L19 6 L17 9 Z" fill="#333" />
          </svg>
        </TabTools>
      </TabRow>

      <Ribbon>
        <Group $w={85}>
          <GroupBody>
            <Big $w={64} $disabled>
              <BigIcon><DuplicateIcon /></BigIcon>
              <BigText>Duplicate</BigText>
              <BigCaret><Triangle color="#a8a8a8" /></BigCaret>
            </Big>
            <SmallTools><GreyX /><Magnifier /></SmallTools>
          </GroupBody>
          <GroupLabel>Outline</GroupLabel>
        </Group>
        <Group $w={53}>
          <GroupBody>
            <Big $w={52}>
              <BigIcon><Bolt /></BigIcon>
              <BigText>Solve</BigText>
              <BigCaret><Triangle /></BigCaret>
            </Big>
          </GroupBody>
          <GroupLabel $inset={9}>
            Solver
            <Launcher width="6" height="6" viewBox="0 0 6 6"><path d="M0.5 0.5 L3 0.5 M0.5 0.5 L0.5 3 M2 2 L5.5 5.5 M5.5 2.5 L5.5 5.5 L2.5 5.5" stroke="#666" fill="none" /></Launcher>
          </GroupLabel>
        </Group>
        <Group $w={351}>
          <GroupBody>
            <Big $w={55}>
              <BigIcon><AnalysisIcon /></BigIcon>
              <BigText>Analysis</BigText>
              <BigCaret><Triangle /></BigCaret>
            </Big>
            <Column $w={121}>
              <SmallButton $disabled><IconCell><NamedSelectionIcon /></IconCell>Named Selection</SmallButton>
              <SmallButton $disabled><IconCell><CoordGreyIcon /></IconCell>Coordinate System</SmallButton>
              <SmallButton $disabled><IconCell><RemotePointIcon /></IconCell>Remote Point</SmallButton>
            </Column>
            <Column $w={80}>
              <SmallButton><IconCell><CommandsIcon /></IconCell>Commands</SmallButton>
              <SmallButton><IconCell><CommentIcon /></IconCell>Comment</SmallButton>
              <SmallButton><IconCell><ChartIcon /></IconCell>Chart</SmallButton>
            </Column>
            <Column $w={90}>
              <SmallButton><IconCell><ImagesIcon /></IconCell>Images<Triangle /></SmallButton>
              <SmallButton><IconCell><SectionPlaneIcon /></IconCell>Section Plane</SmallButton>
              <SmallButton><IconCell><AnnotationIcon /></IconCell>Annotation</SmallButton>
            </Column>
          </GroupBody>
          <GroupLabel>Insert</GroupLabel>
        </Group>
        <Group $w={53}>
          <GroupBody>
            <Big $w={52}>
              <BigIcon><InertialIcon /></BigIcon>
              <BigText>Inertial</BigText>
              <BigCaret><Triangle /></BigCaret>
            </Big>
          </GroupBody>
        </Group>
        <Group $w={387}>
          <GroupBody>
            <Big $w={53}>
              <BigIcon><LoadsIcon /></BigIcon>
              <BigText>Loads</BigText>
              <BigCaret><Triangle /></BigCaret>
            </Big>
            <Column $w={64}>
              <SmallButton><IconCell><SmallLoad face="#12e012" mark="force" /></IconCell>Force</SmallButton>
              <SmallButton><IconCell><SmallLoad face="#12e012" mark="moment" /></IconCell>Moment</SmallButton>
              <SmallButton><IconCell><SmallLoad face="#12e012" mark="pressure" /></IconCell>Pressure</SmallButton>
            </Column>
            <InnerSep />
            <Big $w={57}>
              <BigIcon><SupportsIcon /></BigIcon>
              <BigText>Supports</BigText>
              <BigCaret><Triangle /></BigCaret>
            </Big>
            <Column $w={94}>
              <SmallButton><IconCell><SmallLoad face="#1e8ff0" mark="fixed" /></IconCell>Fixed</SmallButton>
              <SmallButton><IconCell><Frictionless /></IconCell>Frictionless</SmallButton>
              <SmallButton><IconCell><SmallLoad face="#1e8ff0" mark="disp" /></IconCell>Displacement</SmallButton>
            </Column>
            <InnerSep />
            <Big $w={66}>
              <BigIcon><ConditionsIcon /></BigIcon>
              <BigText>Conditions</BigText>
              <BigCaret><Triangle /></BigCaret>
            </Big>
            <InnerSep />
            <Big $w={49}>
              <BigIcon><DirectFeIcon /></BigIcon>
              <BigText>Direct<br />FE<Triangle /></BigText>
            </Big>
          </GroupBody>
          <GroupLabel>Structural</GroupLabel>
        </Group>
        <Group $w={141}>
          <GroupBody>
            <Big $w={75}>
              <BigIcon><WriteInputIcon /></BigIcon>
              <BigText>Write Input<br />File...</BigText>
            </Big>
            <Big $w={56} $disabled>
              <BigIcon><ExportIcon /></BigIcon>
              <BigText>Export<br />Nastran File</BigText>
            </Big>
          </GroupBody>
          <GroupLabel>Tools</GroupLabel>
        </Group>
        <Group $w={157}>
          <GroupBody $inset={4}>
            <Big $w={64}>
              <BigIcon><WorksheetIcon /></BigIcon>
              <BigText>Worksheet</BigText>
            </Big>
            <Big $w={41} $hot>
              <BigIcon><GraphIcon /></BigIcon>
              <BigText>Graph</BigText>
            </Big>
            <Big $w={42} $hot>
              <BigIcon><TableIcon /></BigIcon>
              <BigText>Tabular<br />Data</BigText>
            </Big>
          </GroupBody>
          <GroupLabel>Views</GroupLabel>
        </Group>
      </Ribbon>

      <Main>
        <LeftColumn>
          <OutlinePanel>
            <PanelHeader>Outline<Grip /><PanelButtons /></PanelHeader>
            <OutlineTools>
              <NameSelect>Name<Triangle /></NameSelect>
              <SearchBox>Search Outline</SearchBox>
              <svg width="28" height="16" viewBox="0 0 28 16"><path d="M5 3 L11 8 L17 3" fill="none" stroke={GOLD} strokeWidth="1.6" /><path d="M21 12 L27 12 L24 15 Z M21 10 L27 10" fill="#222" stroke="#222" strokeWidth="0.6" /></svg>
            </OutlineTools>
            <TreeArea>
              <OutlineTree />
              <ScrollBar>
                <ScrollArrow><Chevron dir="up" /></ScrollArrow>
                <ScrollTrack $offset={29}><ScrollThumb $size={57} /></ScrollTrack>
                <ScrollArrow><Chevron dir="down" /></ScrollArrow>
              </ScrollBar>
            </TreeArea>
          </OutlinePanel>
          <DetailsPanel>
            <PanelHeader>Details of "Analysis Settings"<Grip /><PanelButtons /></PanelHeader>
            <DetailsBody>
              <PropList>
                <PropTop />
                <Section title="Step Controls" open />
                <Rows rows={rowsA} />
                <Section title="Solver Controls" open />
                <Rows rows={rowsB} />
                <Section title="Restart Controls" />
                <Section title="Nonlinear Controls" />
                <Section title="Advanced" />
              </PropList>
              <ScrollBar>
                <ScrollArrow><Chevron dir="up" /></ScrollArrow>
                <ScrollTrack $offset={1}><ScrollThumb $size={220} /></ScrollTrack>
                <ScrollArrow><Chevron dir="down" /></ScrollArrow>
              </ScrollBar>
            </DetailsBody>
          </DetailsPanel>
        </LeftColumn>

        <RightColumn>
          <Viewport>
            <Model />
            <Logo>
              <LogoName>ANSYS</LogoName>
              <LogoRelease>2021 <b>R1</b></LogoRelease>
              <LogoEdition>ACADEMIC</LogoEdition>
            </Logo>
          </Viewport>
          <BottomRow>
            <MessagesPanel>
              <PanelHeader $tall $inset={6}>Messages<Grip /><PanelButtons /></PanelHeader>
              <MessagesHeader>
                <MessagesCol $w={50} />
                <MessagesCol>Text</MessagesCol>
                <MessagesCol $w={93}>Association</MessagesCol>
              </MessagesHeader>
              <MessagesBody />
              <HorizontalBar>
                <SideArrow><Chevron dir="left" /></SideArrow>
                <HorizontalTrack><HorizontalThumb /></HorizontalTrack>
                <SideArrow><Chevron dir="right" /></SideArrow>
              </HorizontalBar>
              <BottomTabs>
                <BottomTab $w={126}>Selection Information</BottomTab>
                <BottomTab $w={38}>Graph</BottomTab>
                <BottomTab $w={60} $active>Messages</BottomTab>
              </BottomTabs>
            </MessagesPanel>
            <TabularPanel>
              <PanelHeader $tall $inset={4}>Tabular Data<Grip /><PanelButtons /></PanelHeader>
              <TabularBody>
                <DataTable>
                  <tbody>
                    <tr>
                      <DataCell $w={10} $head />
                      <DataCell $w={33} $head>Steps</DataCell>
                      <DataCell $w={66} $head>End Time [s]</DataCell>
                    </tr>
                    {[["1", "0.1"], ["2", "0.2"], ["3", "1.2"]].map(([step, time]) => (
                      <tr key={step}>
                        <DataCell $head>{step}</DataCell>
                        <DataCell $head>{step}</DataCell>
                        <DataCell $white>{time}</DataCell>
                      </tr>
                    ))}
                    <tr>
                      <DataCell $head>*</DataCell>
                      <DataCell $head />
                      <DataCell $head $white />
                    </tr>
                  </tbody>
                </DataTable>
              </TabularBody>
            </TabularPanel>
          </BottomRow>
        </RightColumn>
      </Main>
    </Page>
  );
}

export default App;
